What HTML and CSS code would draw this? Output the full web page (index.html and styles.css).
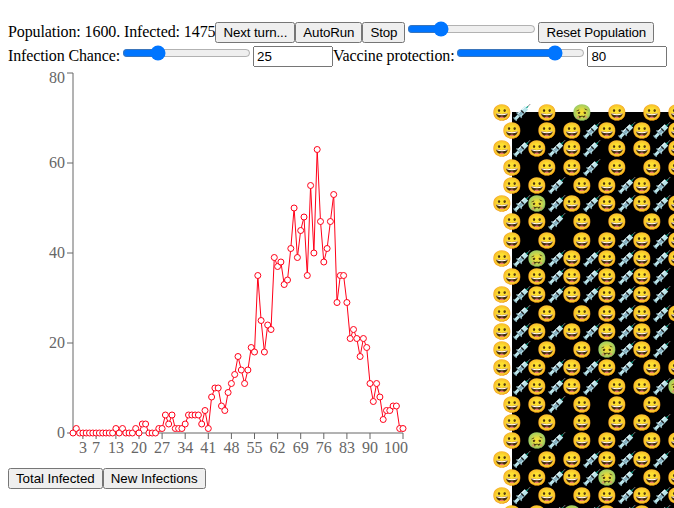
FILE: index.html
```html
<!DOCTYPE html>
<html lang="en">
<head>
    <meta charset="UTF-8">
    <meta name="viewport" content="width=device-width, initial-scale=1.0">
    <title>Epidemic</title>
    <link rel="stylesheet" href="styles.css">
</head>
<body>
    <div class="controls"><span class="status">Population: 1600. Infected: 1475</span><button type="button">Next turn...</button><button type="button">AutoRun</button><button type="button">Stop</button><input type="range" min="0" max="100" value="23"><button type="button">Reset Population</button></div>
    <div class="controls"><label for="chance">Infection Chance:</label><input type="range" min="0" max="100" value="25"><input class="num" id="chance" type="text" value="25"><label for="protection">Vaccine protection:</label><input type="range" min="0" max="100" value="80"><input class="num" id="protection" type="text" value="80"></div>
    <div class="main">
        <div class="chart-col">
            <svg id="chart" class="chart" width="400" height="400"></svg>
            <div class="chart-tabs"><button type="button">Total Infected</button><button type="button">New Infections</button></div>
        </div>
        <div id="field" class="field"></div>
    </div>
    <script src="script.js"></script>
</body>
</html>
```

FILE: styles.css
```css
html, body {
    overflow: hidden;
    height: 100%;
}
body {
    margin: 0;
    padding: 19px 8px 0;
    font-size: 16px;
}
button {
    letter-spacing: -0.11px;
}
.controls {
    white-space: nowrap;
    letter-spacing: -0.13px;
}
.status {
    letter-spacing: -0.1px;
}
.num {
    width: 80px;
    box-sizing: border-box;
}
.main {
    display: flex;
    margin-top: 1px;
}
.chart-col {
    width: 400px;
    flex: none;
}
.chart {
    display: block;
}
.chart-tabs button {
    letter-spacing: -0.04px;
}
.axis {
    stroke: #666;
    fill: none;
}
.tick-label {
    fill: #666;
    font-size: 16px;
}
.line {
    stroke: #ff0018;
    fill: none;
}
.dot {
    stroke: #ff0018;
    fill: #fff;
}
.field {
    position: relative;
    flex: none;
    width: 1400px;
    height: 730px;
    margin: 44px 0 0 104px;
    background: #000;
}
.cell {
    position: absolute;
    transform: translate(-50%, -50%);
    white-space: nowrap;
}
```

FILE: script.js
```js
// chart: 400x400, margins as in the layout of the plot area
const infected = [0,1,0,0,0,0,0,0,0,0,0,0,0,1,0,1,0,0,0,1,0,2,2,0,0,0,1,1,4,2,4,1,1,1,2,4,4,4,4,2,5,1,8,10,10,6,5,9,11,13,17,14,11,14,19,18,35,25,18,24,23,39,37,38,33,34,41,50,39,45,48,35,55,40,63,47,38,41,47,53,29,35,35,29,21,23,21,17,21,19,11,7,11,8,3,5,5,6,6,1,1];
const ticksX = [3,7,13,20,27,34,41,48,55,62,69,76,83,90,100];
const ticksY = [0,20,40,60,80];

const plot = { left: 65, right: 395, top: 5, bottom: 365 };
const px = i => plot.left + i * (plot.right - plot.left) / 100;
const py = v => plot.bottom - v * (plot.bottom - plot.top) / 80;

let svg = `<path class="axis" d="M${plot.left} ${plot.top}V${plot.bottom}H${plot.right}"/>`;
ticksY.forEach(v => {
    svg += `<path class="axis" d="M${plot.left - 6} ${py(v)}H${plot.left}"/>`;
    svg += `<text class="tick-label" x="${plot.left - 8}" y="${v === 80 ? py(v) + 10 : py(v) + 5}" text-anchor="end">${v}</text>`;
});
ticksX.forEach(t => {
    svg += `<path class="axis" d="M${px(t)} ${plot.bottom}v6"/>`;
    svg += `<text class="tick-label" x="${t === 100 ? px(t) - 7 : px(t)}" y="${plot.bottom + 20}" text-anchor="middle">${t}</text>`;
});
svg += `<polyline class="line" points="${infected.map((v, i) => px(i) + "," + py(v)).join(" ")}"/>`;
infected.forEach((v, i) => {
    svg += `<circle class="dot" cx="${px(i)}" cy="${py(v)}" r="3"/>`;
});
document.getElementById("chart").innerHTML = svg;

// field: a = healthy, b = healthy + vaccine, c = sick, d = sick + vaccine
const rows = [
    "bacaab", "aabbbb", "bbbabb", "aabaab", "ababba", "bdbbbb", "abaaab", "aaabbb",
    "bdbbbb", "abbbba", "bbbbba", "baabbb", "bbbbba", "baadba", "bbbbab", "bbbabd",
    "abaaaa", "aaaaba", "adabab", "babbba", "abbdab", "baabbb", "abdbba"
];
const emoji = { a: "😀", b: "😀💉", c: "🤢", d: "🤢💉" };
const field = document.getElementById("field");
rows.forEach((row, r) => {
    [...row].forEach((kind, k) => {
        const cell = document.createElement("div");
        cell.className = "cell";
        cell.textContent = emoji[kind];
        cell.style.left = k * 35 + "px";
        cell.style.top = r * 18.24 + "px";
        field.appendChild(cell);
    });
});
```
